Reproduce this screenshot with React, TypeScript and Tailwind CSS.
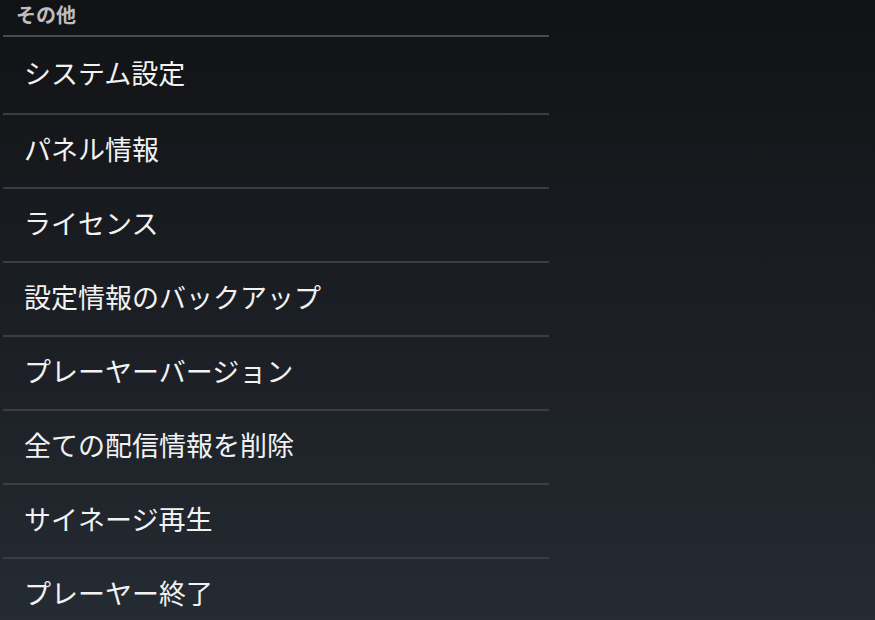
import React from 'react';

const items = [
  'システム設定',
  'パネル情報',
  'ライセンス',
  '設定情報のバックアップ',
  'プレーヤーバージョン',
  '全ての配信情報を削除',
  'サイネージ再生',
  'プレーヤー終了',
];

const App: React.FC = () => {
  return (
    <div
      className="h-[620px] w-[875px] overflow-hidden bg-gradient-to-b from-[#111215] to-[#252b33]"
      style={{ fontFamily: '"Noto Sans CJK JP", "Noto Sans", sans-serif' }}
    >
      <div className="w-[549px] pl-[3px]">
        {/* Section header */}
        <div className="h-[35px] pl-[13px] pt-[1px] text-[20px] leading-[28px] font-bold text-[#bdbdbd]">
          その他
        </div>
        <div className="h-[2px] bg-[#4a4a4c]" />

        {/* Menu rows */}
        {items.map((label, i) => (
          <div key={label}>
            <div
              className={`flex items-center pl-[21px] pb-[3px] text-[27px] text-[#f2f2f2] ${
                i === 0 ? 'h-[76px]' : 'h-[72px]'
              }`}
            >
              {label}
            </div>
            {i < items.length - 1 && <div className="h-[2px] bg-[#3a3e43]" />}
          </div>
        ))}
      </div>
    </div>
  );
};

export default App;
